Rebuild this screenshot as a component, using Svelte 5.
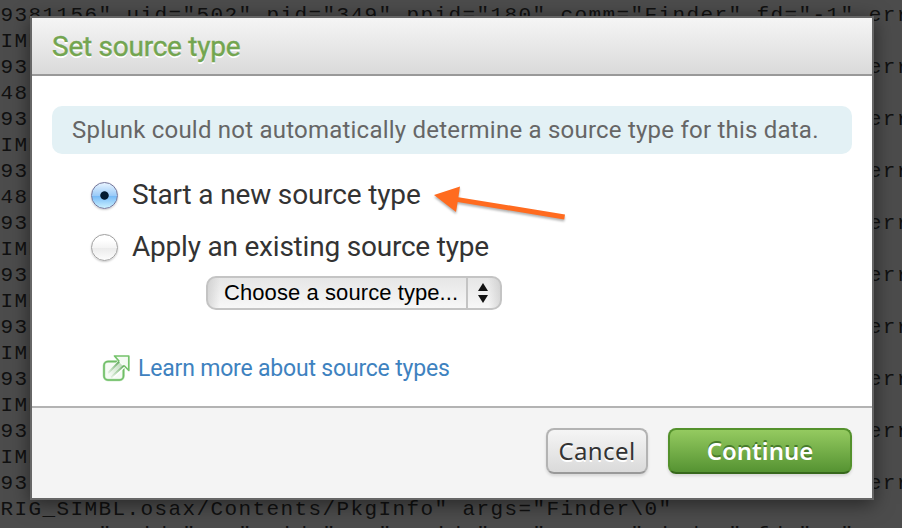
<script>
  const lines = [
    '9381156" uid="502" pid="349" ppid="180" comm="Finder" fd="-1" err',
    'IMB',
    ...['93', '48', '93', 'IMB', '93', '48', '93', 'IMB', '93', 'IMB', '93', 'IMB', '93', 'IMB', '93', 'IMB', '93'].map(
      (start, i) => (i % 2 === 0 ? start.padEnd(62, ' ') + 'err' : start)
    ),
    'RIG_SIMBL.osax/Contents/PkgInfo" args="Finder\\0"',
    '9381156" uid="502" pid="349" ppid="180" comm="Finder" fd="-1"'
  ];
  let choice = $state('new');
</script>

<div class="screen">
  <div class="log">
    {#each lines as line}
      <div class="line">{line}</div>
    {/each}
  </div>

  <section class="dialog">
    <header><h1>Set source type</h1></header>
    <main>
      <p class="notice"><span>Splunk could not automatically determine a source type for this data.</span></p>
      <div class="options">
        <label>
          <input type="radio" value="new" bind:group={choice} />
          <span class="start">Start a new source type</span>
        </label>
        <label>
          <input type="radio" value="existing" bind:group={choice} />
          <span class="apply">Apply an existing source type</span>
        </label>
      </div>
      <div class="select">
        <span class="value">Choose a source type...</span>
        <span class="stepper">
          <svg width="12" height="20" viewBox="0 0 12 20"><path d="M6 0 11 8H1zM1 12h10l-5 8z" fill="#111" /></svg>
        </span>
      </div>
      <div class="more">
        <svg width="28" height="28" viewBox="0 0 28 28">
          <defs>
            <linearGradient id="shaft" x1="0" y1="1" x2="1" y2="0">
              <stop offset="0" stop-color="#5aa653" stop-opacity="0" />
              <stop offset="1" stop-color="#4c9d46" />
            </linearGradient>
          </defs>
          <rect x="2" y="7.5" width="19.5" height="18.5" rx="4" fill="#f6fbf5" stroke="#b5e0b0" stroke-width="2.6" />
          <rect x="2" y="7.5" width="19.500" height="18.500" rx="4" fill="none" stroke="#6fbd66" stroke-width="1.5" />
          <path d="M12 1.500h15.300V17L22.500 14 12 24 5 18.500 15.500 7z" fill="#fff" />
          <path d="m6 19.500 11-11.500 3.500 3.500L9.500 23z" fill="url(#shaft)" opacity="0.4" />
          <path d="m6 19 11.200-11.500M9 23.500l13-12" fill="none" stroke="url(#shaft)" stroke-width="1.800" />
          <path d="M17.300 7.500 12.500 2h14.300v14.500L22 11.500" fill="#f4fbf3" stroke="#74c26b" stroke-width="1.700" stroke-linejoin="round" />
        </svg>
        <a href="#source-types">Learn more about source types</a>
      </div>
      <svg class="arrow" width="140" height="40" viewBox="0 0 140 40">
        <path d="M5 10 31 1.500 29.400 12.200 136 29.500 135.200 34.500 28.700 17 27 27z" fill="#ff6b1f" />
      </svg>
    </main>
    <footer>
      <button class="cancel"><span>Cancel</span></button>
      <button class="continue"><span>Continue</span></button>
    </footer>
  </section>
</div>

<style>
  :global(body) { margin: 0; overflow: hidden; }
  .screen {
    position: relative;
    width: 902px;
    height: 528px;
    overflow: hidden;
    background: #4c4c4c;
    font-family: Roboto, sans-serif;
  }
  .log {
    padding: 3px 0 0 0.5px;
    font-family: 'Courier New', 'Liberation Mono', monospace;
    font-size: 21px;
    letter-spacing: 1.4px;
    color: #111;
  }
  .line { height: 26px; line-height: 26px; white-space: pre; }
  .dialog {
    position: absolute;
    left: 30px;
    top: 16px;
    box-sizing: border-box;
    width: 844px;
    height: 484px;
    display: flex;
    flex-direction: column;
    border: 2px solid #666;
    background: #fff;
    box-shadow: 0 4px 18px rgba(0, 0, 0, 0.5);
  }
  header {
    height: 56px;
    border-bottom: 2px solid #999;
    background: linear-gradient(#f5f5f5, #dadada);
  }
  h1 {
    margin: 0;
    padding-left: 20px;
    font-size: 28px;
    font-weight: 400;
    line-height: 57px;
    letter-spacing: -0.25px;
    color: #73a550;
    text-shadow: 0 2px 0 #fff;
    -webkit-text-stroke: 0.4px #73a550;
  }
  main { position: relative; flex: 1; padding: 30px 20px 0; }
  .notice {
    box-sizing: border-box;
    height: 48px;
    margin: 0;
    padding-left: 20px;
    border-radius: 10px;
    background: #e3f1f5;
    font-size: 24px;
    line-height: 48px;
    letter-spacing: 0.22px;
    color: #666;
    white-space: nowrap;
  }
  .options { display: flex; flex-direction: column; padding: 16px 0 0 38px; }
  label {
    display: flex;
    align-items: center;
    gap: 14px;
    height: 52px;
    font-size: 28px;
    color: #333;
    white-space: nowrap;
  }
  label span { padding-bottom: 4px; }
  .start { letter-spacing: -0.16px; }
  .apply { letter-spacing: -0.21px; }
  input {
    appearance: none;
    box-sizing: border-box;
    width: 27px;
    height: 27px;
    margin: 0 0.5px 1px;
    border: 1.5px solid #a0a0a0;
    border-radius: 50%;
    background: linear-gradient(#fff 20%, #f4f4f4 50%, #ebebeb 52%, #fdfdfd);
    box-shadow: 0 1px 2px #ccc;
  }
  input:checked {
    border-color: #74759a;
    background:
      radial-gradient(circle, #041c32 3.8px, transparent 4.6px),
      linear-gradient(#e8f4ff, #9bcbf8 50%, #75b9f6 52%, #cbf1ff);
  }
  .select {
    box-sizing: border-box;
    display: flex;
    width: 296px;
    height: 34px;
    margin: 2px 0 0 154px;
    border: 2px solid #c4c4c4;
    border-radius: 10px;
    background:
      linear-gradient(90deg, rgba(190, 190, 190, 0.5), transparent 12px, transparent 280px, rgba(190, 190, 190, 0.5)),
      linear-gradient(#e6e6e6, #f7f7f7);
    font: 22px/30px 'Liberation Sans', Arial, sans-serif;
    letter-spacing: 0.08px;
    color: #000;
  }
  .value { flex: 1; padding-left: 16px; white-space: nowrap; }
  .stepper {
    display: flex;
    align-items: center;
    width: 34px;
    padding-left: 9px;
    box-sizing: border-box;
    border-left: 2px solid #c4c4c4;
  }
  .more { display: flex; align-items: center; gap: 8px; height: 30px; margin: 43px 0 0 50px; }
  .more a {
    font-size: 23px;
    letter-spacing: -0.19px;
    color: #3e82bf;
    text-decoration: none;
    white-space: nowrap;
  }
  .arrow {
    position: absolute;
    left: 397px;
    top: 109px;
    filter: drop-shadow(0 2px 1px rgba(0, 0, 0, 0.3));
  }
  footer {
    box-sizing: border-box;
    display: flex;
    justify-content: flex-end;
    gap: 20px;
    height: 92px;
    padding: 20px 20px 0;
    border-top: 2px solid #b3b3b3;
    background: #f4f4f4;
  }
  button {
    box-sizing: border-box;
    height: 46px;
    padding: 0;
    border: 2px solid;
    border-radius: 8px;
    font: 24px/42px 'Noto Sans', sans-serif;
    box-shadow: 0 2px 3px rgba(0, 0, 0, 0.12);
  }
  .cancel {
    width: 102px;
    border-color: #b3b3b3 #b3b3b3 #999;
    background: linear-gradient(#f5f5f5, #dadada);
    color: #333;
    letter-spacing: 0.4px;
    text-shadow: 0 2px 0 #fff;
  }
  .continue {
    width: 184px;
    border-color: #54912c #54912c #37681c;
    background: linear-gradient(#94ca60, #559332);
    color: #fff;
    font-weight: 600;
    text-shadow: 0 -2px 0 #477b2b;
  }
</style>
